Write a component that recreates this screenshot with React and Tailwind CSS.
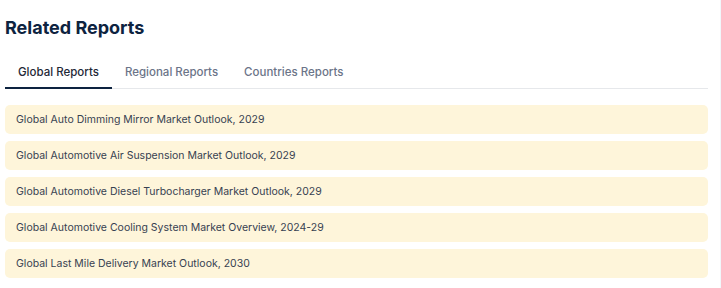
import { useState } from "react"

const TABS = ["Global Reports", "Regional Reports", "Countries Reports"]

const REPORTS = [
    "Global Auto Dimming Mirror Market Outlook, 2029",
    "Global Automotive Air Suspension Market Outlook, 2029",
    "Global Automotive Diesel Turbocharger Market Outlook, 2029",
    "Global Automotive Cooling System Market Overview, 2024-29",
    "Global Last Mile Delivery Market Outlook, 2030",
]

const App = () => {
    const [activeTab, setActiveTab] = useState(0)

    return (
        <div className="w-[721px] h-[288px] bg-white font-['Inter',sans-serif] overflow-hidden border-r border-r-[#f1f8fb]">
            <div className="w-[708px] pl-[5px] pt-[16px]">
                {/* heading */}
                <h2 className="text-[18px] leading-[24px] font-bold text-[#0d2340]">Related Reports</h2>

                {/* tabs */}
                <div className="mt-[24px] flex border-b border-b-[#e6e8eb]">
                    {TABS.map((tab, i) => (
                        <button
                            key={tab}
                            onClick={() => setActiveTab(i)}
                            className={
                                i === activeTab
                                    ? "px-[13px] pb-[7px] pt-0 text-[11.5px] leading-[16px] font-medium text-[#1f2937] border-b-2 border-b-[#0d2340] -mb-px"
                                    : "px-[13px] pb-[7px] pt-0 text-[11.5px] leading-[16px] font-medium text-[#6b7488] border-b-2 border-b-transparent -mb-px"
                            }
                        >
                            {tab}
                        </button>
                    ))}
                </div>

                {/* report list */}
                <div className="mt-[16px] flex flex-col gap-[7px]">
                    {REPORTS.map(report => (
                        <div key={report} className="h-[29px] flex items-center px-[11px] rounded-[5px] bg-[#fef5da] text-[10.5px] text-[#374151]">
                            {report}
                        </div>
                    ))}
                </div>
            </div>
        </div>
    )
}

export default App
